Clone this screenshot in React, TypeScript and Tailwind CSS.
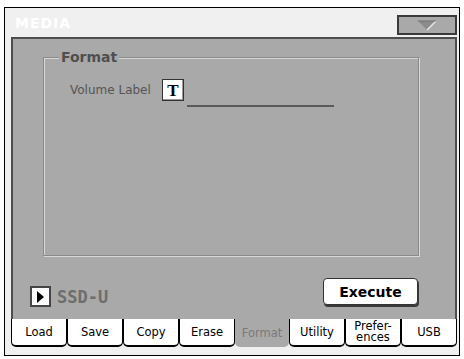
import React from 'react';

const tabs = ['Load', 'Save', 'Copy', 'Erase', 'Format', 'Utility', 'Prefer-\nences', 'USB'];

export default function App() {
  return (
    <div className="w-[464px] h-[359px] bg-white pt-[7px] pl-[4px] overflow-hidden" style={{ fontFamily: '"DejaVu Sans", sans-serif' }}>
      <div className="w-[456px] h-[349px] border border-black bg-[#f0f0f0] flex flex-col">
        {/* title bar */}
        <div className="h-[29px] flex items-start justify-between pl-[10px] pr-[2px]">
          <span className="mt-[7px] text-[14px] leading-[16px] font-bold tracking-[1px] text-white">MEDIA</span>
          <div className="mt-[7px] w-[60px] h-[20px] border-2 border-[#3a3a3a] bg-[#a9a9a9] flex items-center justify-center">
            <svg width="20" height="11" viewBox="0 0 20 11">
              <polygon points="1,1 19,1 10,10" fill="#8c8c8c" />
              <polyline points="19,1 10,10" stroke="#e8e8e8" strokeWidth="1.5" fill="none" />
              <polyline points="1,1 19,1" stroke="#707070" strokeWidth="1" fill="none" />
            </svg>
          </div>
        </div>

        {/* main panel */}
        <div className="ml-[6px] w-[446px] h-[282px] bg-[#a9a9a9] border-t-2 border-l-2 border-r-2 border-[#4e4e4e] flex flex-col">
          <div className="relative mt-[18px] ml-[30px] w-[376px] h-[199px] border border-[#8a8a8a] shadow-[inset_1px_1px_0_#d8d8d8,1px_1px_0_#d8d8d8]">
            <span className="absolute -top-[9px] left-[15px] px-[2px] bg-[#a9a9a9] text-[14px] leading-[16px] font-bold text-[#4f4f4f]">
              Format
            </span>
            <div className="flex items-start mt-[21px] ml-[26px]">
              <span className="w-[92px] mt-[4px] text-[12px] leading-[14px] text-[#555]">Volume Label</span>
              <div className="w-[22px] h-[22px] bg-white border border-[#333] shadow-[inset_-1px_-1px_0_#999] flex items-center justify-center">
                <span className="text-[17px] leading-[17px] font-bold text-black" style={{ fontFamily: '"Liberation Serif", serif' }}>T</span>
              </div>
              <div className="ml-[3px] mt-[26px] w-[147px] h-[2px] bg-[#5a5a5a]" />
            </div>
          </div>

          <div className="flex items-start mt-[22px]">
            <div className="ml-[17px] mt-[8px] w-[21px] h-[21px] bg-white border-2 border-[#444] flex items-center justify-center">
              <svg width="9" height="12" viewBox="0 0 9 12">
                <polygon points="1,0 8,6 1,12" fill="#000" />
              </svg>
            </div>
            <span
              className="ml-[6px] mt-[10px] text-[17px] leading-[18px] font-bold text-[#6e6e6e]"
              style={{ fontFamily: '"DejaVu Sans Mono", monospace' }}
            >
              SSD-U
            </span>
            <div className="ml-auto mr-[37px] w-[95px] h-[27px] bg-white border border-[#333] rounded-[4px] shadow-[1px_2px_0_#3a3a3a] flex items-center justify-center">
              <span className="text-[14px] leading-[16px] font-bold text-black">Execute</span>
            </div>
          </div>
        </div>

        {/* tabs */}
        <div className="ml-[6px] w-[446px] h-[28px] flex">
          {tabs.map((t) =>
            t === 'Format' ? (
              <div key={t} className="flex-1 bg-[#a9a9a9] rounded-b-[5px] flex items-center justify-center">
                <span className="text-[11.5px] leading-[13px] text-[#7a7a7a]">{t}</span>
              </div>
            ) : (
              <div
                key={t}
                className="flex-1 bg-white border-l border-r border-b-2 border-black rounded-b-[5px] flex items-center justify-center"
              >
                <span className="text-[11.5px] leading-[11px] text-black text-center whitespace-pre">{t}</span>
              </div>
            )
          )}
        </div>
      </div>
    </div>
  );
}
